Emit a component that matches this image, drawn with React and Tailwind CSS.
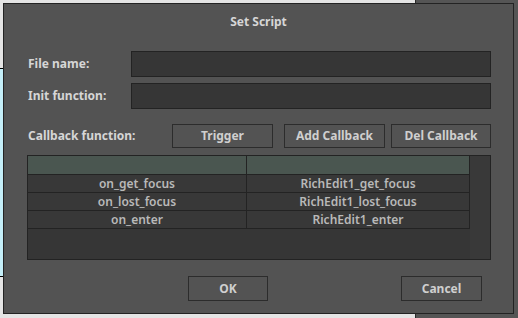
export default function App() {
  const rows = [
    ["on_get_focus", "RichEdit1_get_focus"],
    ["on_lost_focus", "RichEdit1_lost_focus"],
    ["on_enter", "RichEdit1_enter"],
  ];
  const font = { fontFamily: '"Noto Sans", "DejaVu Sans", sans-serif' };
  return (
    <div className="relative w-[518px] h-[318px] overflow-hidden bg-[#e4e4e4]" style={font}>
      {/* background windows */}
      <div className="absolute left-[-10px] top-[68px] w-[20px] h-[209px] bg-[#c4eef8] border-y border-black" />
      <div className="absolute left-[415px] top-[-2px] w-[110px] h-[330px] bg-[#555555] border border-[#2a2a2a]" />

      {/* dialog */}
      <div className="absolute left-[3px] top-[3px] w-[511px] h-[311px] bg-[#535353] border border-[#232323] flex flex-col text-[12px] font-bold text-[#d6d6d6]">
        <div className="pt-[9px] h-[18px] leading-[18px] text-center box-content">Set Script</div>

        <div className="pl-[24px] pr-[22px] mt-[20px] flex flex-col gap-[6px]">
          <div className="flex items-center">
            <div className="w-[103px] leading-[16px]">File name:</div>
            <div className="flex-1 h-[26px] bg-[#363636] border border-[#232323]" />
          </div>
          <div className="flex items-center">
            <div className="w-[103px] leading-[16px]">Init function:</div>
            <div className="flex-1 h-[26px] bg-[#363636] border border-[#232323]" />
          </div>

          <div className="flex items-center mt-[9px]">
            <div className="w-[144px] leading-[16px]">Callback function:</div>
            <button className="w-[101px] h-[24px] border border-[#2c2c2c] bg-[#535353] text-[#cfcfcf] font-bold">Trigger</button>
            <button className="ml-[11px] w-[101px] h-[24px] border border-[#2c2c2c] bg-[#535353] text-[#cfcfcf] font-bold">Add Callback</button>
            <button className="ml-[6px] w-[100px] h-[24px] border border-[#2c2c2c] bg-[#535353] text-[#cfcfcf] font-bold">Del Callback</button>
          </div>

          <div className="ml-[-1px] mt-[1px] h-[105px] bg-[#363636] border border-[#232323] flex">
            <div className="w-[442px] flex flex-col">
              <div className="flex h-[19px] border-b border-[#232323] bg-[#4a5650]">
                <div className="w-[219px] border-r border-[#232323]" />
                <div className="flex-1 border-r border-[#232323]" />
              </div>
              {rows.map(([a, b]) => (
                <div key={a} className="flex h-[18px] border-b border-[#232323] bg-[#383838] text-[#b9b9b9] font-semibold leading-[17px]">
                  <div className="w-[219px] border-r border-[#232323] text-center">{a}</div>
                  <div className="flex-1 border-r border-[#232323] text-center">{b}</div>
                </div>
              ))}
            </div>
            <div className="flex-1 bg-[#393939]" />
          </div>
        </div>

        <div className="flex mt-[16px]">
          <button className="ml-[184px] w-[80px] h-[25px] border border-[#2c2c2c] bg-[#535353] text-[#cfcfcf] font-bold">OK</button>
          <button className="ml-[133px] w-[81px] h-[25px] border border-[#2c2c2c] bg-[#535353] text-[#cfcfcf] font-bold">Cancel</button>
        </div>
      </div>
    </div>
  );
}
